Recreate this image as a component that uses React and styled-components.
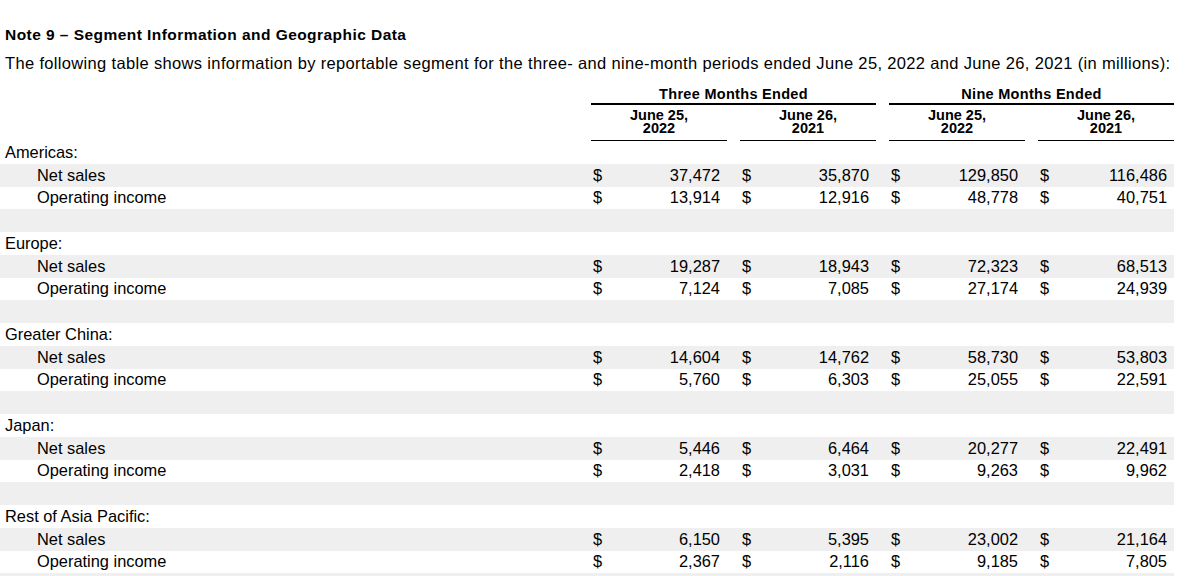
import React from "react";
import styled, { createGlobalStyle } from "styled-components";

const GlobalStyle = createGlobalStyle`
  body {
    margin: 0;
    background: #ffffff;
    color: #000000;
    font-family: "Liberation Sans", Arial, sans-serif;
  }
`;

const COLS = "591px 136px 13px 136px 13px 136px 13px 136px";

const Page = styled.div`
  width: 1200px;
  height: 576px;
  overflow: hidden;
  padding-top: 26px;
  box-sizing: border-box;
`;

const Title = styled.div`
  font-size: 15.5px;
  line-height: 18px;
  font-weight: bold;
  letter-spacing: 0.45px;
  padding-left: 5px;
`;

const Intro = styled.div`
  font-size: 16.5px;
  line-height: 20px;
  letter-spacing: 0.34px;
  margin-top: 9px;
  padding-left: 5px;
  white-space: nowrap;
`;

const Table = styled.div`
  width: 1174px;
  margin-top: 12px;
`;

const HeadRow = styled.div`
  display: grid;
  grid-template-columns: ${COLS};
`;

const GroupHead = styled.div`
  grid-column: ${(p) => p.$start} / span 3;
  font-size: 14.5px;
  font-weight: bold;
  letter-spacing: 0.3px;
  line-height: 18px;
  text-align: center;
  border-bottom: 2px solid #000;
`;

const SubHead = styled.div`
  grid-column: ${(p) => p.$col};
  font-size: 14.5px;
  font-weight: bold;
  line-height: 13px;
  text-align: center;
  padding: 4px 0 5px;
  border-bottom: 1.5px solid #000;
`;

const Row = styled.div`
  display: grid;
  grid-template-columns: ${COLS};
  height: 22.75px;
  align-items: center;
  font-size: 16.4px;
  background: ${(p) => (p.$shaded ? "#efefef" : "transparent")};
`;

const Label = styled.div`
  padding-left: ${(p) => (p.$indent ? "37px" : "5px")};
  white-space: nowrap;
`;

const Amount = styled.div`
  grid-column: ${(p) => p.$col};
  display: flex;
  justify-content: space-between;
  padding: 0 7px 0 2px;
`;

const segments = [
  {
    name: "Americas:",
    sales: ["37,472", "35,870", "129,850", "116,486"],
    income: ["13,914", "12,916", "48,778", "40,751"],
  },
  {
    name: "Europe:",
    sales: ["19,287", "18,943", "72,323", "68,513"],
    income: ["7,124", "7,085", "27,174", "24,939"],
  },
  {
    name: "Greater China:",
    sales: ["14,604", "14,762", "58,730", "53,803"],
    income: ["5,760", "6,303", "25,055", "22,591"],
  },
  {
    name: "Japan:",
    sales: ["5,446", "6,464", "20,277", "22,491"],
    income: ["2,418", "3,031", "9,263", "9,962"],
  },
  {
    name: "Rest of Asia Pacific:",
    sales: ["6,150", "5,395", "23,002", "21,164"],
    income: ["2,367", "2,116", "9,185", "7,805"],
  },
];

const valueCols = [2, 4, 6, 8];

function Values({ values }) {
  return values.map((v, i) => (
    <Amount key={i} $col={valueCols[i]}>
      <span>$</span>
      <span>{v}</span>
    </Amount>
  ));
}

export default function App() {
  return (
    <Page>
      <GlobalStyle />
      <Title>Note 9 – Segment Information and Geographic Data</Title>
      <Intro>
        The following table shows information by reportable segment for the three- and nine-month periods ended June 25,
        2022 and June 26, 2021 (in millions):
      </Intro>
      <Table>
        <HeadRow>
          <GroupHead $start={2}>Three Months Ended</GroupHead>
          <GroupHead $start={6}>Nine Months Ended</GroupHead>
        </HeadRow>
        <HeadRow>
          <SubHead $col={2}>June 25,<br />2022</SubHead>
          <SubHead $col={4}>June 26,<br />2021</SubHead>
          <SubHead $col={6}>June 25,<br />2022</SubHead>
          <SubHead $col={8}>June 26,<br />2021</SubHead>
        </HeadRow>
        {segments.map((s) => (
          <React.Fragment key={s.name}>
            <Row>
              <Label>{s.name}</Label>
            </Row>
            <Row $shaded>
              <Label $indent>Net sales</Label>
              <Values values={s.sales} />
            </Row>
            <Row>
              <Label $indent>Operating income</Label>
              <Values values={s.income} />
            </Row>
            <Row $shaded />
          </React.Fragment>
        ))}
      </Table>
    </Page>
  );
}
